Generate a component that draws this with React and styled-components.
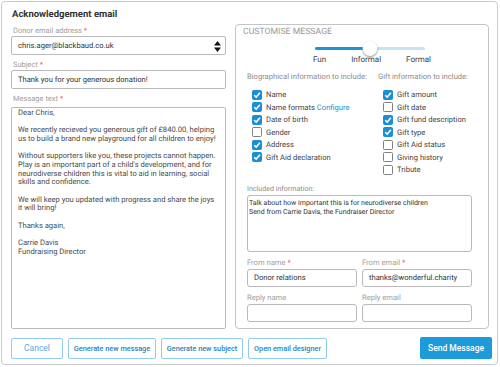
import React from "react";
import styled, { createGlobalStyle } from "styled-components";

const Global = createGlobalStyle`
  html, body { margin: 0; padding: 0; background: #fff; }
  body {
    font-family: Roboto, "Liberation Sans", sans-serif;
    text-rendering: geometricPrecision;
  }
  * { box-sizing: border-box; }
`;

const Page = styled.div`
  padding: 1px;
  width: 500px;
  height: 367px;
`;

const Dialog = styled.div`
  width: 497px;
  height: 364px;
  border: 1px solid #cacaca;
  border-radius: 4px;
  padding: 7px 5px 0 9px;
  display: flex;
  flex-direction: column;
`;

const Title = styled.h1`
  margin: 0 0 0 1px;
  font-size: 9.5px;
  font-weight: 700;
  color: #333;
  line-height: 12px;
  height: 14px;
  flex: none;
`;

const Body = styled.div`
  display: flex;
  gap: 9px;
  height: 306px;
  flex: none;
`;

const LeftCol = styled.div`
  width: 215px;
  display: flex;
  flex-direction: column;
`;

const Label = styled.label`
  display: block;
  flex: none;
  font-size: 7.5px;
  line-height: 10px;
  color: #a0a0a0;
  margin: ${(p) => p.$mt || 0}px 0 ${(p) => p.$mb || 0}px 2px;
`;

const Req = styled.span`
  color: #e25b5b;
`;

const Field = styled.div`
  flex: none;
  height: 19px;
  border: 1px solid #b9b9b9;
  border-radius: 2px;
  display: flex;
  align-items: center;
  padding: 0 6px;
  font-size: 7.6px;
  color: #333;
  position: relative;
`;

const SortIcon = styled.svg`
  position: absolute;
  right: 4px;
  top: 4px;
`;

const TextArea = styled.div`
  flex: 1;
  border: 1px solid #b9b9b9;
  border-radius: 2px;
  padding: 1px 6px;
  font-size: 7.6px;
  line-height: 8.65px;
  color: #4a4a4a;
  white-space: pre-wrap;
`;

const Panel = styled.div`
  width: 254px;
  margin-top: 1px;
  border: 1px solid #c4c4c4;
  border-radius: 4px;
  padding: 2px 16px 6px 11px;
  display: flex;
  flex-direction: column;
`;

const Legend = styled.div`
  flex: none;
  font-size: 8.7px;
  color: #9a9a9a;
  line-height: 10px;
  margin-left: -4px;
  text-transform: uppercase;
`;

const SliderWrap = styled.div`
  flex: none;
  display: flex;
  flex-direction: column;
  align-items: center;
  margin-top: 10px;
  margin-left: 21px;
`;

const Track = styled.div`
  position: relative;
  width: 110px;
  height: 3px;
  border-radius: 2px;
  background: #c6e3f6;
`;

const Fill = styled.div`
  height: 100%;
  border-radius: 2px;
  background: #1c94d6;
`;

const Thumb = styled.div`
  position: absolute;
  top: -6px;
  width: 15px;
  height: 15px;
  border-radius: 50%;
  background: #fff;
  box-shadow: 0 1px 2px rgba(0, 0, 0, 0.45);
  transform: translateX(-50%);
`;

const Ticks = styled.div`
  display: flex;
  justify-content: space-between;
  width: 118px;
  margin: 4.5px 0 0 4px;
  font-size: 8px;
  color: #444;
  line-height: 10px;
`;

const Columns = styled.div`
  flex: none;
  display: grid;
  grid-template-columns: 131px 1fr;
  margin-top: 7.5px;
`;

const ColHead = styled.div`
  font-size: 7.6px;
  color: #8c8c8c;
  line-height: 10px;
  margin-bottom: 6.25px;
  white-space: nowrap;
`;

const CheckRow = styled.div`
  display: flex;
  align-items: center;
  height: 12.5px;
  gap: 4px;
  padding-left: 5px;
  font-size: 7.6px;
  color: #444;
  white-space: nowrap;
`;

const Box = styled.span`
  width: 10px;
  height: 10px;
  border-radius: 1.5px;
  flex: none;
  display: inline-flex;
  align-items: center;
  justify-content: center;
  background: ${(p) => (p.$on ? "#1c8fd4" : "#fff")};
  border: 1px solid ${(p) => (p.$on ? "#1c8fd4" : "#808080")};
`;

const Link = styled.span`
  color: #2b8fd0;
  margin-left: 2px;
`;

const InfoLabel = styled.div`
  flex: none;
  font-size: 7.1px;
  color: #8c8c8c;
  line-height: 10px;
  margin-top: 8px;
  margin-bottom: 1.5px;
`;

const InfoArea = styled.div`
  flex: none;
  height: 56.5px;
  border: 1px solid #b9b9b9;
  border-radius: 3px;
  padding: 3px 0 0 1px;
  font-size: 7px;
  line-height: 8.4px;
  color: #333;
  white-space: pre-wrap;
`;

const Pair = styled.div`
  flex: none;
  display: grid;
  grid-template-columns: 1fr 1fr;
  gap: 5px;
  margin-top: ${(p) => p.$mt}px;
`;

const SmallLabel = styled.div`
  font-size: 7.6px;
  color: #a0a0a0;
  line-height: 10px;
  margin-bottom: 1px;
`;

const SmallInput = styled.div`
  height: 18px;
  border: 1px solid #b9b9b9;
  border-radius: 3px;
  padding: 0 6px;
  display: flex;
  align-items: center;
  font-size: 7.6px;
  color: #333;
  white-space: nowrap;
`;

const Footer = styled.div`
  flex: none;
  display: flex;
  align-items: center;
  gap: 5px;
  margin-top: 8px;
`;

const Btn = styled.button`
  height: 21px;
  border: 1px solid #93cbed;
  background: #fff;
  border-radius: 2px;
  color: ${(p) => (p.$light ? "#5fa9dc" : "#2f7fba")};
  font-family: inherit;
  font-size: ${(p) => (p.$light ? "8.5px" : "7.3px")};
  font-weight: ${(p) => (p.$light ? 400 : 500)};
  padding: 0;
  width: ${(p) => p.$w}px;
  cursor: pointer;
`;

const Primary = styled.button`
  margin-left: auto;
  height: 22px;
  width: 72px;
  border: none;
  border-radius: 2px;
  background: #1d9ad9;
  color: #fff;
  font-family: inherit;
  font-size: 8.5px;
  font-weight: 500;
`;

const Check = () => (
  <svg width="8" height="8" viewBox="0 0 8 8">
    <path d="M1.2 4.2 L3.2 6.1 L6.9 1.8" fill="none" stroke="#fff" strokeWidth="1.5" />
  </svg>
);

const CB = ({ on, children }) => (
  <CheckRow>
    <Box $on={on}>{on && <Check />}</Box>
    <span>{children}</span>
  </CheckRow>
);

const message = `Dear Chris,

We recently recieved you generous gift of £840.00, helping us to build a brand new playground for all children to enjoy!

Without supporters like you, these projects cannot happen. Play is an important part of a child's development, and for neurodiverse children this is vital to aid in learning, social skills and confidence.

We will keep you updated with progress and share the joys it will bring!

Thanks again,

Carrie Davis
Fundraising Director`;

export default function App() {
  return (
    <Page>
      <Global />
      <Dialog>
        <Title>Acknowledgement email</Title>
        <Body>
          <LeftCol>
            <Label $mt={3}>
              Donor email address <Req>*</Req>
            </Label>
            <Field>
              chris.ager@blackbaud.co.uk
              <SortIcon width="7" height="11" viewBox="0 0 7 11">
                <path d="M3.5 0 L7 4.5 L0 4.5 Z M3.5 11 L7 6.5 L0 6.5 Z" fill="#111" />
              </SortIcon>
            </Field>
            <Label $mt={5}>
              Subject <Req>*</Req>
            </Label>
            <Field>Thank you for your generous donation!</Field>
            <Label $mt={5} $mb={3}>
              Message text <Req>*</Req>
            </Label>
            <TextArea>{message}</TextArea>
          </LeftCol>
          <Panel>
            <Legend>Customise message</Legend>
            <SliderWrap>
              <Track>
                <Fill style={{ width: "50%" }} />
                <Thumb style={{ left: "50%" }} />
              </Track>
              <Ticks>
                <span>Fun</span>
                <span>Informal</span>
                <span>Formal</span>
              </Ticks>
            </SliderWrap>
            <Columns>
              <div>
                <ColHead>Biographical information to include:</ColHead>
                <CB on>Name</CB>
                <CB on>
                  Name formats<Link>Configure</Link>
                </CB>
                <CB on>Date of birth</CB>
                <CB>Gender</CB>
                <CB on>Address</CB>
                <CB on>Gift Aid declaration</CB>
              </div>
              <div>
                <ColHead>Gift information to include:</ColHead>
                <CB on>Gift amount</CB>
                <CB>Gift date</CB>
                <CB on>Gift fund description</CB>
                <CB on>Gift type</CB>
                <CB>Gift Aid status</CB>
                <CB>Giving history</CB>
                <CB>Tribute</CB>
              </div>
            </Columns>
            <InfoLabel>Included information:</InfoLabel>
            <InfoArea>
              {`Talk about how important this is for neurodiverse children
Send from Carrie Davis, the Fundraiser Director`}
            </InfoArea>
            <Pair $mt={6}>
              <div>
                <SmallLabel>
                  From name <Req>*</Req>
                </SmallLabel>
                <SmallInput>Donor relations</SmallInput>
              </div>
              <div>
                <SmallLabel>
                  From email <Req>*</Req>
                </SmallLabel>
                <SmallInput>thanks@wonderful.charity</SmallInput>
              </div>
            </Pair>
            <Pair $mt={6.4}>
              <div>
                <SmallLabel>Reply name</SmallLabel>
                <SmallInput />
              </div>
              <div>
                <SmallLabel>Reply email</SmallLabel>
                <SmallInput />
              </div>
            </Pair>
          </Panel>
        </Body>
        <Footer>
          <Btn $light $w={52}>Cancel</Btn>
          <Btn $w={88}>Generate new message</Btn>
          <Btn $w={82}>Generate new subject</Btn>
          <Btn $w={79}>Open email designer</Btn>
          <Primary>Send Message</Primary>
        </Footer>
      </Dialog>
    </Page>
  );
}
